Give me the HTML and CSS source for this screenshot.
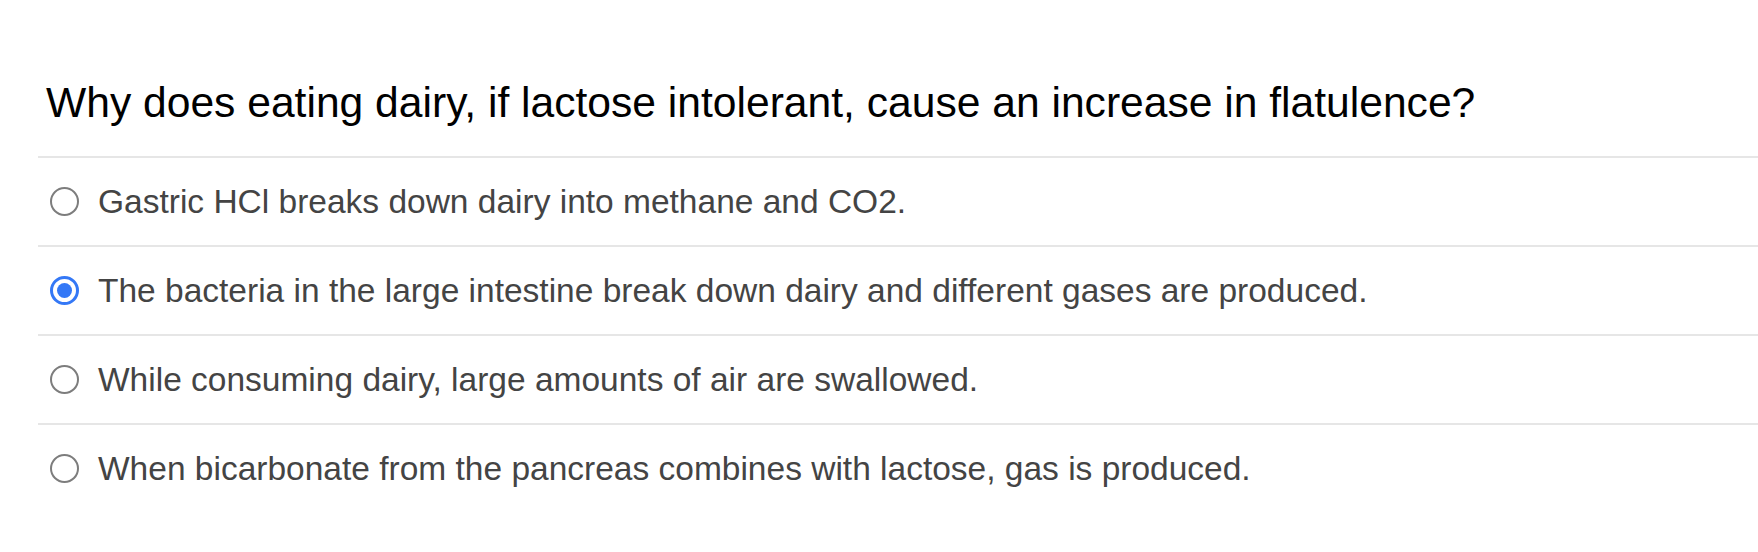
FILE: index.html
```html
<!DOCTYPE html>
<html lang="en">
<head>
<meta charset="utf-8">
<title>Question</title>
<link rel="stylesheet" href="styles.css">
</head>
<body>
<div class="question">
  <h1 class="question-title">Why does eating dairy, if lactose intolerant, cause an increase in flatulence?</h1>
  <ul class="options">
    <li class="option"><span class="radio"></span><span class="option-text">Gastric HCl breaks down dairy into methane and CO2.</span></li>
    <li class="option"><span class="radio checked"></span><span class="option-text">The bacteria in the large intestine break down dairy and different gases are produced.</span></li>
    <li class="option"><span class="radio"></span><span class="option-text">While consuming dairy, large amounts of air are swallowed.</span></li>
    <li class="option"><span class="radio"></span><span class="option-text">When bicarbonate from the pancreas combines with lactose, gas is produced.</span></li>
  </ul>
</div>
</body>
</html>
```

FILE: styles.css
```css
html, body {
  margin: 0;
  padding: 0;
  background: #ffffff;
}

body {
  font-family: "Liberation Sans", Arial, Helvetica, sans-serif;
}

.question {
  padding: 79px 0 0 38px;
}

.question-title {
  margin: 0 0 31px 8px;
  font-size: 42.6px;
  line-height: 46px;
  font-weight: normal;
  color: #000000;
}

.options {
  list-style: none;
  margin: 0;
  padding: 0;
}

.option {
  display: flex;
  align-items: center;
  gap: 19px;
  height: 87px;
  padding-left: 12px;
  border-top: 2px solid #e6e6e6;
}

.radio {
  flex: none;
  box-sizing: border-box;
  width: 29px;
  height: 29px;
  border-radius: 50%;
  border: 2px solid #7d7d7d;
  background: #ffffff;
  position: relative;
}

.radio.checked {
  border: 3px solid #3478f6;
}

.radio.checked::after {
  content: "";
  position: absolute;
  left: 4px;
  top: 4px;
  width: 15px;
  height: 15px;
  border-radius: 50%;
  background: #3478f6;
}

.option-text {
  font-size: 33.5px;
  line-height: 40px;
  color: #444444;
}
```
